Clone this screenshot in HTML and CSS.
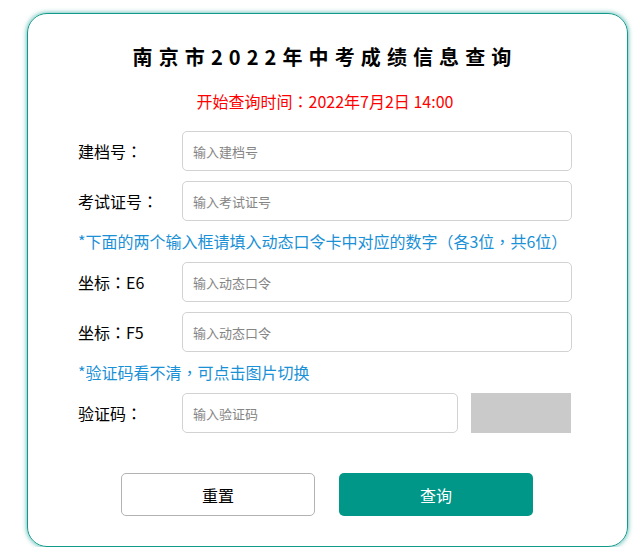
FILE: index.html
```html
<!DOCTYPE html>
<html lang="zh-CN">
<head>
<meta charset="utf-8">
<title>南京市2022年中考成绩信息查询</title>
<link rel="stylesheet" href="styles.css">
</head>
<body>
<div class="card">
  <h1 class="title">南京市2022年中考成绩信息查询</h1>
  <p class="start">开始查询时间<span class="p" lang="zh-TW">：</span>2022年7月2日 14:00</p>
  <form class="form">
    <div class="row">
      <label class="label">建档号<span class="p" lang="zh-TW">：</span></label>
      <input class="input" type="text" placeholder="输入建档号">
    </div>
    <div class="row">
      <label class="label">考试证号<span class="p" lang="zh-TW">：</span></label>
      <input class="input" type="text" placeholder="输入考试证号">
    </div>
    <p class="note">*下面的两个输入框请填入动态口令卡中对应的数字（各3位<span class="p" lang="zh-TW">，</span>共6位）</p>
    <div class="row">
      <label class="label">坐标<span class="p" lang="zh-TW">：</span>E6</label>
      <input class="input" type="text" placeholder="输入动态口令">
    </div>
    <div class="row">
      <label class="label">坐标<span class="p" lang="zh-TW">：</span>F5</label>
      <input class="input" type="text" placeholder="输入动态口令">
    </div>
    <p class="note">*验证码看不清<span class="p" lang="zh-TW">，</span>可点击图片切换</p>
    <div class="row">
      <label class="label">验证码<span class="p" lang="zh-TW">：</span></label>
      <input class="input" type="text" placeholder="输入验证码">
      <div class="captcha"></div>
    </div>
    <div class="buttons">
      <button type="reset" class="btn btn-reset">重置</button>
      <button type="button" class="btn btn-query">查询</button>
    </div>
  </form>
</div>
</body>
</html>
```
FILE: styles.css
```css
* { box-sizing: border-box; }
html, body { margin: 0; padding: 0; background: #fff; }
body {
  font-family: "Noto Sans CJK SC", "Noto Sans", sans-serif;
  padding: 13px 0 0 27px;
}
.p { font-family: "Noto Sans CJK TC", "Noto Sans CJK SC", sans-serif; }
.card {
  width: 601px;
  height: 534px;
  border: 1px solid #11998a;
  border-radius: 20px;
  box-shadow: 0 0 5px rgba(0, 150, 136, 0.75);
  padding: 28px 55px 0 50px;
  display: flex;
  flex-direction: column;
}
.title {
  margin: 0;
  font-size: 20px;
  line-height: 30px;
  font-weight: bold;
  letter-spacing: 6.1px;
  text-align: center;
  color: #000;
}
.start {
  margin: 17px 0 0;
  font-size: 16px;
  line-height: 24px;
  text-align: center;
  color: #f00;
}
.form {
  margin-top: 18px;
  display: flex;
  flex-direction: column;
  gap: 10px;
}
.row {
  display: flex;
  align-items: center;
  height: 40px;
}
.label {
  width: 104px;
  flex: none;
  font-size: 16px;
  color: #000;
}
.input {
  flex: 1;
  min-width: 0;
  height: 40px;
  border: 1px solid #d2d2d2;
  border-radius: 5px;
  padding: 0 10px;
  font-family: inherit;
  font-size: 13px;
  outline: none;
}
.input::placeholder { color: #858585; }
.captcha {
  width: 100px;
  height: 40px;
  margin-left: 13px;
  margin-right: 1px;
  background: #cacaca;
  flex: none;
}
.note {
  margin: 0;
  font-size: 16px;
  line-height: 21px;
  color: #1a90d6;
}
.buttons {
  margin-top: 30px;
  display: flex;
  justify-content: center;
  gap: 24px;
  padding-left: 4px;
}
.btn {
  width: 194px;
  height: 43px;
  border-radius: 5px;
  font-family: inherit;
  font-size: 16px;
  cursor: pointer;
}
.btn-reset {
  background: #fff;
  border: 1px solid #b3b3b3;
  color: #000;
}
.btn-query {
  background: #009688;
  border: none;
  color: #fff;
}
```
